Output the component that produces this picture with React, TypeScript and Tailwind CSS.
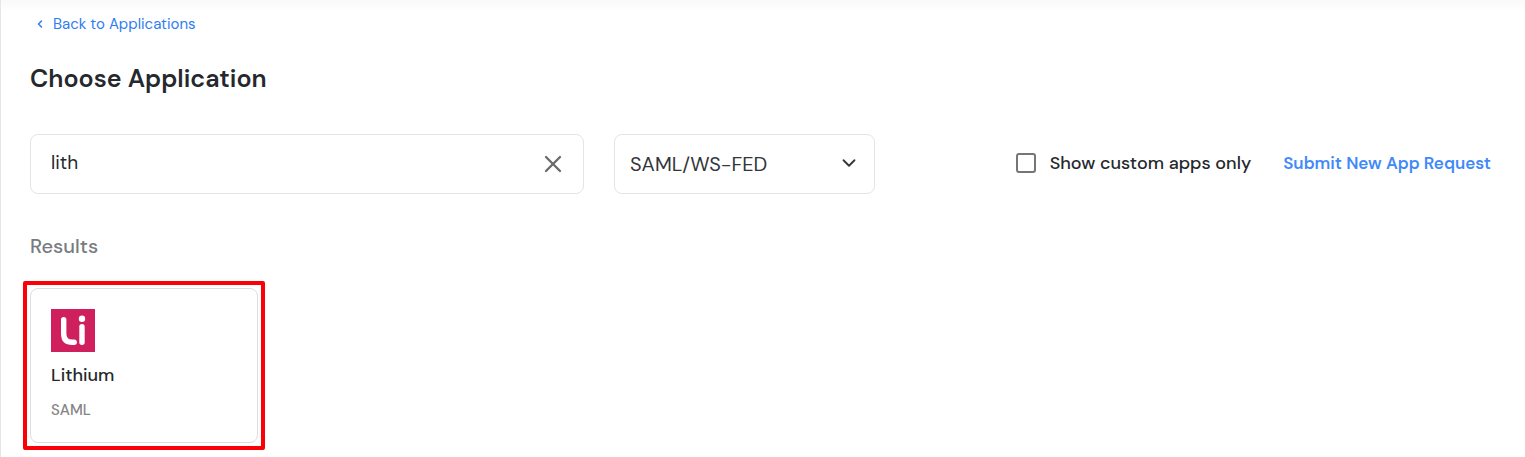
import { ChevronDown, ChevronLeft, X } from "lucide-react";

const LithiumLogo = () => {
  return (
    <svg viewBox="0 0 44 43" className="w-11 h-[43px]" aria-hidden="true">
      <rect width="44" height="43" fill="#cf1f5c" />
      <g fill="none" stroke="#fff" strokeWidth="5.4" strokeLinecap="round">
        <path d="M12.700 10.700v14q0 8.600 8.600 8.600h1.900" />
        <path d="M31 17.700v15.600" />
      </g>
      <circle cx="31" cy="9.800" r="3.200" fill="#fff" />
    </svg>
  );
};

const AppCard = ({ name, type }: { name: string; type: string }) => {
  return (
    <div className="relative w-[228px]">
      <button
        type="button"
        className="block w-full rounded-lg border border-[#dcdde2] px-5 pt-5 pb-[21px] text-left"
      >
        <LithiumLogo />
        <span className="mt-[11px] block text-[18px] leading-6 font-medium text-[#25282c]">
          {name}
        </span>
        <span className="mt-3 block text-[15px] leading-[22px] font-medium text-[#858585]">
          {type}
        </span>
      </button>
      <div className="pointer-events-none absolute -inset-[7px] rounded-xs border-4 border-[#fb0007]" />
    </div>
  );
};

const App = () => {
  return (
    <main className="min-h-screen border-l border-[#e6e6e6] bg-white bg-linear-to-b from-[#f9f9f9] to-white to-[12px] pt-3 pr-[34px] pb-3.5 pl-[29px] font-['DM_Sans',Inter,sans-serif] text-[#25282c]">
      <a
        href="#"
        className="ml-1 inline-flex h-6 items-center gap-[7px] text-[15px] leading-6 text-[#2f7df0]"
      >
        <ChevronLeft size={12} strokeWidth={3} />
        Back to Applications
      </a>
      <h1 className="mt-6 text-[25px] leading-9 font-semibold">
        Choose Application
      </h1>

      <div className="mt-[37px] flex items-center gap-[30px]">
        <div className="flex h-[60px] max-w-[554px] flex-1 items-center rounded-lg border border-[#e2e5e8] pr-4 pl-5">
          <input
            type="text"
            aria-label="Search applications"
            defaultValue="lith"
            className="h-full min-w-0 flex-1 pb-1 text-[19px] outline-none"
          />
          <button type="button" aria-label="Clear search">
            <X size={28} strokeWidth={2} className="text-[#6b6b6b]" />
          </button>
        </div>

        <div className="relative w-[261px]">
          <select
            aria-label="Application type"
            className="h-[60px] w-full appearance-none rounded-lg border border-[#e2e5e8] bg-white px-[15px] text-[20px] text-[#33363a]"
          >
            <option>SAML/WS-FED</option>
          </select>
          <ChevronDown
            size={22}
            className="pointer-events-none absolute top-[18px] right-[15px] text-[#33363a]"
          />
        </div>

        <div className="ml-auto flex items-center gap-8 pb-0.5 leading-6 whitespace-nowrap">
          <label className="flex items-center gap-3.5 text-[18px] font-medium">
            <input
              type="checkbox"
              className="size-5 appearance-none rounded-[3px] border-2 border-[#767676] checked:bg-[#2f7df0]"
            />
            Show custom apps only
          </label>
          <a href="#" className="text-[17px] font-semibold text-[#3f8af8]">
            Submit New App Request
          </a>
        </div>
      </div>

      <h2 className="mt-10 mb-[30px] text-[20px] leading-6 font-medium text-[#777b80]">
        Results
      </h2>
      <AppCard name="Lithium" type="SAML" />
    </main>
  );
};

export default App;
